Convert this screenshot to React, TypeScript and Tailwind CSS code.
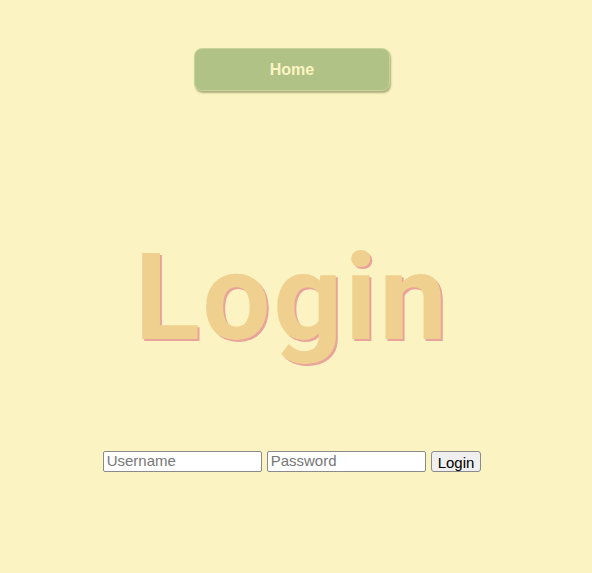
export default function App() {
  return (
    <div className="min-h-[573px] w-full bg-[#fbf4c2]">
      <div className="w-[584px] flex flex-col items-center">
        <button className="mt-[48px] w-[196px] h-[43px] rounded-[8px] bg-[#b0c285] border border-[#c6d49a] shadow-[1px_2px_2px_rgba(120,130,80,0.6)] text-[#fbf4c2] font-bold text-[16px] font-['Liberation_Sans',Arial,sans-serif]">
          Home
        </button>
        <h1 className="mt-[136px] text-[121px] leading-[142px] tracking-[2.5px] font-bold text-[#f0d08e] font-['Roboto',sans-serif] [text-shadow:2px_2px_0_#e9a39a]">
          Login
        </h1>
        <form className="mt-[82px] flex items-center gap-[5px] font-['Liberation_Sans',Arial,sans-serif] text-[15px]">
          <input
            placeholder="Username"
            className="w-[159px] h-[21px] px-[3px] bg-white border border-[#8a8a8a] rounded-[2px] placeholder:text-[#777]"
          />
          <input
            type="password"
            placeholder="Password"
            className="w-[159px] h-[21px] px-[3px] bg-white border border-[#8a8a8a] rounded-[2px] placeholder:text-[#777]"
          />
          <button
            type="button"
            className="h-[21px] px-[6px] bg-[#efefef] border border-[#8a8a8a] rounded-[3px] text-black"
          >
            Login
          </button>
        </form>
      </div>
    </div>
  );
}
